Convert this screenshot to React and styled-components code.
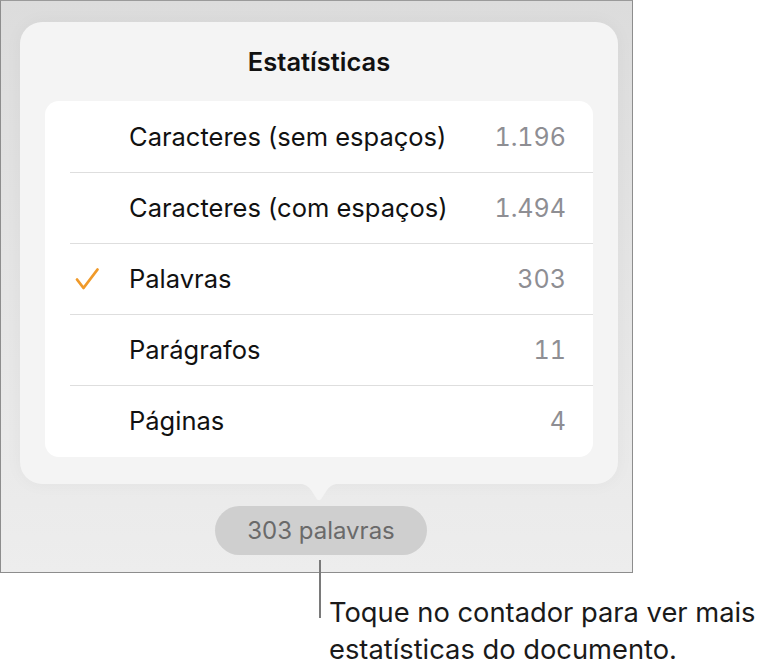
import React from "react";
import styled, { createGlobalStyle } from "styled-components";

const Global = createGlobalStyle`
  html, body { margin: 0; padding: 0; background: #ffffff; }
  body { font-family: Inter, "Noto Sans", Roboto, sans-serif; -webkit-font-smoothing: antialiased; }
`;

const Page = styled.div`
  width: 769px;
  height: 668px;
`;

const Frame = styled.div`
  box-sizing: border-box;
  width: 633px;
  height: 573px;
  border: 1px solid #8d8d8d;
  border-top-color: #9a9a9a;
  background: linear-gradient(180deg, #dcdcdc 0%, #e4e4e4 45%, #ededed 100%);
  padding: 21px 14px 0 19px;
  display: flex;
  flex-direction: column;
  align-items: stretch;
`;

const Card = styled.div`
  position: relative;
  height: 462px;
  box-sizing: border-box;
  background: #f4f4f4;
  border-radius: 22px;
  padding: 0 25px 27px 25px;
  display: flex;
  flex-direction: column;
  box-shadow: 0 0 18px rgba(0, 0, 0, 0.04);
`;

const Pointer = styled.svg`
  position: absolute;
  left: 50%;
  bottom: -21px;
  transform: translateX(-50%);
  width: 52px;
  height: 22px;
  display: block;
`;

const Title = styled.div`
  height: 79px;
  display: flex;
  align-items: center;
  justify-content: center;
  font-size: 25.5px;
  font-weight: 600;
  color: #111;
`;

const List = styled.div`
  flex: 1;
  background: #ffffff;
  border-radius: 14px;
  display: flex;
  flex-direction: column;
  overflow: hidden;
`;

const Row = styled.div`
  position: relative;
  height: 71px;
  display: flex;
  align-items: center;
  padding: 0 27px 0 29px;
  ${(p) =>
    p.$sep &&
    `
    &::before {
      content: "";
      position: absolute;
      top: 0;
      left: 25px;
      right: 0;
      height: 1px;
      background: #dedede;
    }
  `}
`;

const CheckSlot = styled.div`
  width: 55px;
  height: 24px;
  display: flex;
  align-items: center;
`;

const Label = styled.div`
  flex: 1;
  font-size: 25.5px;
  color: #111;
`;

const Value = styled.div`
  font-size: 25px;
  color: #8e8e93;
  font-variant-numeric: tabular-nums;
`;

const CounterArea = styled.div`
  display: flex;
  justify-content: center;
  padding-top: 22px;
  padding-left: 4px;
`;

const Counter = styled.div`
  width: 212px;
  height: 49px;
  border-radius: 25px;
  background: #cfcfcf;
  color: #6a6a6a;
  font-size: 24px;
  display: flex;
  align-items: center;
  justify-content: center;
`;

const Callout = styled.div`
  display: flex;
  align-items: flex-start;
  margin-top: -13px;
  padding-left: 319px;
`;

const Leader = styled.div`
  width: 2px;
  height: 58px;
  background: #7a7a7a;
  flex-shrink: 0;
`;

const CalloutText = styled.div`
  margin-left: 8px;
  margin-top: 34px;
  font-size: 27.3px;
  line-height: 37px;
  color: #1a1a1a;
  white-space: nowrap;
`;

const Check = () => (
  <svg width="26" height="24" viewBox="0 0 26 24">
    <path
      d="M3 12.5 L9.5 21 L23.5 2.5"
      fill="none"
      stroke="#f09a2a"
      strokeWidth="2.8"
      strokeLinecap="round"
      strokeLinejoin="round"
    />
  </svg>
);

const rows = [
  { label: "Caracteres (sem espaços)", value: "1.196" },
  { label: "Caracteres (com espaços)", value: "1.494" },
  { label: "Palavras", value: "303", checked: true },
  { label: "Parágrafos", value: "11" },
  { label: "Páginas", value: "4" },
];

export default function App() {
  return (
    <Page>
      <Global />
      <Frame>
        <Card>
          <Title>Estatísticas</Title>
          <List>
            {rows.map((r, i) => (
              <Row key={r.label} $sep={i > 0}>
                <CheckSlot>{r.checked && <Check />}</CheckSlot>
                <Label>{r.label}</Label>
                <Value>{r.value}</Value>
              </Row>
            ))}
          </List>
          <Pointer viewBox="0 0 52 22">
            <path
              d="M0 0 C10 0 14 2 18 7 L23.5 15.5 C25 17.8 27 17.8 28.5 15.5 L34 7 C38 2 42 0 52 0 Z"
              fill="#f4f4f4"
            />
          </Pointer>
        </Card>
        <CounterArea>
          <Counter>303 palavras</Counter>
        </CounterArea>
      </Frame>
      <Callout>
        <Leader />
        <CalloutText>
          Toque no contador para ver mais
          <br />
          estatísticas do documento.
        </CalloutText>
      </Callout>
    </Page>
  );
}
